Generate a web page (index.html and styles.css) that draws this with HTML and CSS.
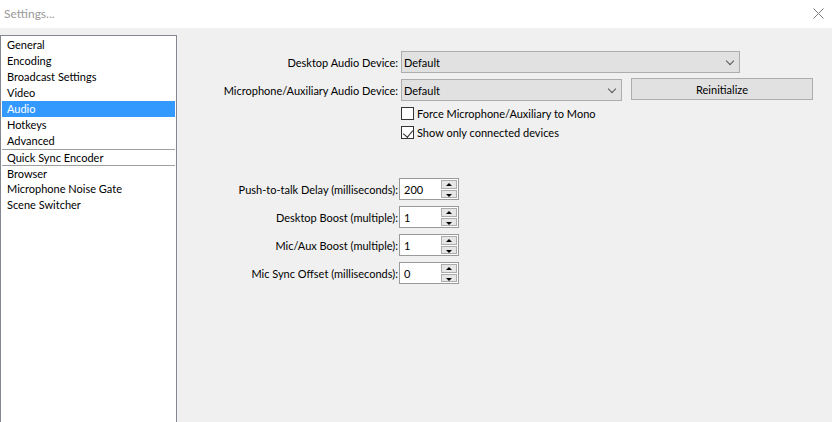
FILE: index.html
```html
<!DOCTYPE html>
<html>
  <head>
    <meta charset="UTF-8">
    <title>Settings...</title>
    <link rel="stylesheet" href="styles.css">
  </head>
  <body>
    <div class="titlebar">
      <span class="title">Settings...</span>
      <svg class="close" width="11" height="11" viewBox="0 0 11 11">
        <path d="M0.5 0.5 L10.5 10.5 M10.5 0.5 L0.5 10.5" stroke="#7a7a7a" stroke-width="1" fill="none"/>
      </svg>
    </div>

    <div class="window">
      <ul class="pages">
        <li>General</li>
        <li>Encoding</li>
        <li>Broadcast Settings</li>
        <li>Video</li>
        <li class="selected">Audio</li>
        <li>Hotkeys</li>
        <li>Advanced</li>
        <li class="group">Quick Sync Encoder</li>
        <li class="group">Browser</li>
        <li>Microphone Noise Gate</li>
        <li>Scene Switcher</li>
      </ul>

      <div class="panel">
        <div class="form devices">
          <label>Desktop Audio Device:</label>
          <div class="combo wide"><span>Default</span><i class="chevron"></i></div>

          <label>Microphone/Auxiliary Audio Device:</label>
          <div class="row">
            <div class="combo"><span>Default</span><i class="chevron"></i></div>
            <button class="btn">Reinitialize</button>
          </div>

          <span></span>
          <div class="check"><span class="box"></span>Force Microphone/Auxiliary to Mono</div>

          <span></span>
          <div class="check"><span class="box checked"></span>Show only connected devices</div>
        </div>

        <div class="form spins">
          <label>Push-to-talk Delay (milliseconds):</label>
          <div class="spin"><span>200</span><div class="arrows"><b class="up"></b><b class="down"></b></div></div>

          <label>Desktop Boost (multiple):</label>
          <div class="spin"><span>1</span><div class="arrows"><b class="up"></b><b class="down"></b></div></div>

          <label>Mic/Aux Boost (multiple):</label>
          <div class="spin"><span>1</span><div class="arrows"><b class="up"></b><b class="down"></b></div></div>

          <label>Mic Sync Offset (milliseconds):</label>
          <div class="spin"><span>0</span><div class="arrows"><b class="up"></b><b class="down"></b></div></div>
        </div>
      </div>
    </div>
  </body>
</html>
```

FILE: styles.css
```css
body {
  margin: 0;
  font-family: Lato, "Liberation Sans", sans-serif;
  font-size: 11px;
  color: #000;
  background-color: #f0f0f0;
  overflow: hidden;
  height: 422px;
}

.titlebar {
  height: 28px;
  background-color: #fff;
  display: flex;
  align-items: center;
  justify-content: space-between;
  padding: 0 8px 2px 4px;
  box-sizing: border-box;
  font-size: 12px;
}

.title {
  color: #999;
}

.window {
  display: flex;
  padding-top: 7px;
}

/* left list of settings pages */
.pages {
  list-style: none;
  margin: 0;
  padding: 1px;
  width: 177px;
  height: 400px;
  box-sizing: border-box;
  background-color: #fff;
  border: 1px solid #828790;
}

.pages li {
  height: 16px;
  line-height: 16px;
  padding-left: 5px;
  box-sizing: border-box;
  white-space: nowrap;
}

.pages li.group {
  border-top: 1px solid #a0a0a0;
  line-height: 15px;
}

.pages li.selected {
  background-color: #3399ff;
  color: #fff;
}

.panel {
  flex: 1;
}

.form {
  display: grid;
  grid-template-columns: 221px auto;
  column-gap: 3px;
  align-items: center;
  justify-items: start;
}

.form label {
  justify-self: end;
  white-space: nowrap;
}

.devices {
  margin-top: 16px;
  row-gap: 6px;
}

.combo {
  height: 22px;
  width: 339px;
  box-sizing: border-box;
  border: 1px solid #adadad;
  background-color: #e1e1e1;
  display: flex;
  align-items: center;
  justify-content: space-between;
  padding: 0 6px 0 2px;
}

.row {
  display: flex;
  gap: 9px;
  align-items: center;
}

.row .combo {
  width: 221px;
}

.chevron {
  width: 5px;
  height: 5px;
  border-right: 1px solid #555;
  border-bottom: 1px solid #555;
  transform: rotate(45deg);
  margin-top: -3px;
}

.btn {
  width: 182px;
  height: 22px;
  border: 1px solid #adadad;
  background-color: #e1e1e1;
  font: inherit;
  padding: 0;
  margin-top: -2px;
}

.check {
  display: flex;
  align-items: center;
  gap: 3px;
  height: 13px;
}

.box {
  width: 13px;
  height: 13px;
  box-sizing: border-box;
  border: 1px solid #333;
  background-color: #fff;
  position: relative;
}

.box.checked::after {
  content: "";
  position: absolute;
  left: 3px;
  top: 1px;
  width: 5px;
  height: 8px;
  border-right: 1px solid #333;
  border-bottom: 1px solid #333;
  transform: rotate(40deg);
}

.spins {
  margin-top: 39px;
  row-gap: 6px;
  column-gap: 1px;
}

.spin {
  width: 60px;
  height: 22px;
  box-sizing: border-box;
  border: 1px solid #9a9a9a;
  background-color: #fff;
  display: flex;
  align-items: center;
  justify-content: space-between;
  padding: 1px 1px 1px 4px;
}

.arrows {
  display: flex;
  flex-direction: column;
  gap: 1px;
  width: 16px;
  height: 18px;
}

.arrows b {
  flex: 1;
  box-sizing: border-box;
  border: 1px solid #acacac;
  background-color: #e6e6e6;
  position: relative;
}

.arrows b::after {
  content: "";
  position: absolute;
  left: 4px;
  width: 0;
  height: 0;
  border-left: 3px solid transparent;
  border-right: 3px solid transparent;
}

.arrows .up::after {
  top: 2px;
  border-bottom: 3px solid #000;
}

.arrows .down::after {
  top: 3px;
  border-top: 3px solid #000;
}
```
